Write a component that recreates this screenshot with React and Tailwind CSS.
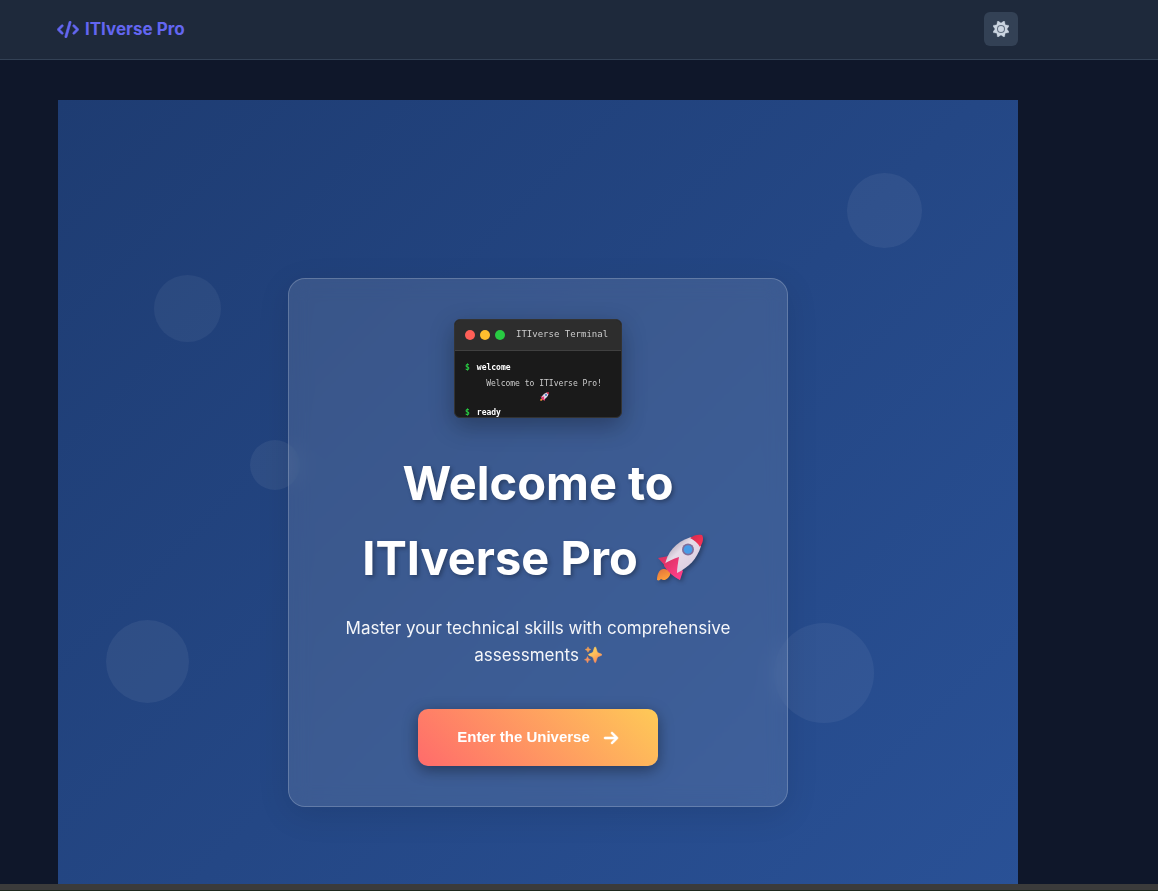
import React from "react";
import { FaCode, FaSun, FaArrowRight } from "react-icons/fa6";

function Rocket({ className, id }) {
  return (
    <svg viewBox="0 0 48 48" className={className} role="img" aria-label="rocket">
      <defs>
        <linearGradient id={id + "-body"} x1="0.2" y1="0.2" x2="0.75" y2="0.8">
          <stop offset="0" stopColor="#b9aebd" />
          <stop offset="0.35" stopColor="#e6dce8" />
          <stop offset="1" stopColor="#dccfe2" />
        </linearGradient>
        <linearGradient id={id + "-fin"} x1="0" y1="0" x2="0.7" y2="1">
          <stop offset="0" stopColor="#d8305e" />
          <stop offset="1" stopColor="#ff3f8a" />
        </linearGradient>
        <linearGradient id={id + "-nose"} x1="0" y1="0" x2="1" y2="1">
          <stop offset="0" stopColor="#d42a4c" />
          <stop offset="1" stopColor="#ff3558" />
        </linearGradient>
        <linearGradient id={id + "-fire"} x1="0" y1="0" x2="0.5" y2="1">
          <stop offset="0" stopColor="#e0703c" />
          <stop offset="1" stopColor="#ffa03a" />
        </linearGradient>
      </defs>
      <path d="M7 35C3 36 1 40 1 46c2 1 3 0 4-1 2 2 5 1 7-1 3-3 3-7 0-8-2-1-3-1-5-1z" fill={"url(#" + id + "-fire)"} />
      <path d="M2 24l11-2 14 15-3 9c-6-4-12-9-15-14-2-3-5-6-7-8z" fill={"url(#" + id + "-fin)"} />
      <path d="M9 31C11 19 19 8 35 3l10 9C41 25 33 33 21 39L9 31z" fill={"url(#" + id + "-body)"} />
      <path d="M8 30c4-3 9-5 15-7-1 6-2 11-2 16l3 7C18 43 12 38 8 32z" fill={"url(#" + id + "-fin)"} />
      <path d="M34 4c4-3 8-4 12-3 2 3 1 8-2 12-2-4-6-7-10-9z" fill={"url(#" + id + "-nose)"} />
      <circle cx="32" cy="15.500" r="6" fill="#806f9b" />
      <circle cx="32" cy="15.500" r="4.300" fill="#479ce8" />
    </svg>
  );
}

function Sparkles({ className }) {
  return (
    <svg viewBox="0 0 18 18" className={className} role="img" aria-label="sparkles">
      <defs>
        <linearGradient id="sparkle" x1="0" y1="0" x2="0.6" y2="1">
          <stop offset="0" stopColor="#ffda5c" />
          <stop offset="0.55" stopColor="#fdbc5a" />
          <stop offset="1" stopColor="#f9875a" />
        </linearGradient>
      </defs>
      <path d="M10.500 1.500c.4-.8 1-.8 1.300 0l1.300 4c.3.9.7 1.300 1.600 1.600l2.600 1c.8.300.8 1 0 1.300l-2.600 1c-.9.300-1.300.7-1.600 1.600l-1.300 4c-.3.8-.9.800-1.300 0l-1.300-4c-.3-.9-.7-1.300-1.600-1.600l-2.500-1c-.8-.3-.8-1 0-1.300l2.500-1c.9-.3 1.300-.7 1.600-1.600z" fill="url(#sparkle)" stroke="url(#sparkle)" strokeWidth="0.600" />
      <path d="M4 .8l.9 1.900 1.900.8-1.900.9L4 6.300l-.9-1.900-1.900-.9 1.900-.8z" fill="#f2a056" stroke="#f2a056" strokeWidth="0.500" />
      <path d="M3.500 10.500l1 2.300 2 .9-2 .9-1 2.400-1-2.400-2-.9 2-.9z" fill="#f5935f" stroke="#f5935f" strokeWidth="0.500" />
    </svg>
  );
}

function Terminal() {
  return (
    <div className="h-[99px] w-[168px] overflow-hidden rounded-md border border-[#333333] bg-[#1a1a1a] font-['DejaVu_Sans_Mono',monospace] shadow-[0_8px_25px_rgba(0,0,0,0.3)]">
      <div className="flex h-[31px] items-center gap-[11px] border-b border-[#404040] bg-[#2d2d2d] px-[10px]">
        <div className="flex gap-[5px]">
          <span className="size-[10px] rounded-full bg-[#ff5f57]" />
          <span className="size-[10px] rounded-full bg-[#ffbd2e]" />
          <span className="size-[10px] rounded-full bg-[#28ca42]" />
        </div>
        <span className="text-[9px] whitespace-nowrap text-[#cccccc]">ITIverse Terminal</span>
      </div>
      <div className="flex flex-col gap-[3px] px-[10px] pt-[10px] text-[8px] leading-[13px]">
        <p className="flex gap-[7px]">
          <span className="font-bold text-[#28ca42]">$</span>
          <span className="font-bold text-white">welcome</span>
        </p>
        <div className="flex flex-col items-center pl-[12px] text-[#cccccc]">
          <span className="whitespace-nowrap">Welcome to ITIverse Pro!</span>
          <span className="flex h-[13px] items-center">
            <Rocket id="small" className="size-[9px]" />
          </span>
        </div>
        <p className="flex gap-[7px]">
          <span className="font-bold text-[#28ca42]">$</span>
          <span className="font-bold text-white">ready</span>
        </p>
      </div>
    </div>
  );
}

export default function App() {
  return (
    <div className="flex h-screen flex-col overflow-hidden bg-[#0f172a] font-[Inter,sans-serif]">
      <header className="flex h-[60px] shrink-0 items-center justify-between border-b border-[#334155] bg-[#1e293b] pr-[140px] pl-[57px]">
        <a href="#home" className="flex items-center gap-[6px] text-[17px] font-bold text-[#6366f1]">
          <FaCode className="h-[17px] w-[22px] stroke-current stroke-[20px]" aria-hidden="true" />
          ITIverse Pro
        </a>
        <button type="button" aria-label="Toggle theme" className="mb-[2px] flex size-[34px] items-center justify-center rounded-md bg-[#334155] text-[#cbd5e1]">
          <FaSun className="size-4 stroke-current stroke-[10px]" aria-hidden="true" />
        </button>
      </header>

      <main className="min-h-0 flex-1 overflow-hidden pt-10 pr-[140px] pl-[58px]">
        <section className="relative flex min-h-[calc(100vh-6px)] items-center justify-center overflow-hidden bg-[linear-gradient(135deg,#1e3c72_0%,#2a5298_100%)]">
          <span className="absolute top-[73px] right-[10%] size-[75px] rounded-full bg-white/6" />
          <span className="absolute top-[175px] left-[10%] size-[67px] rounded-full bg-white/5" />
          <span className="absolute top-[340px] left-[20%] size-[50px] rounded-full bg-white/6" />
          <span className="absolute top-[520px] left-[5%] size-[83px] rounded-full bg-white/6" />
          <span className="absolute top-[523px] right-[15%] size-[100px] rounded-full bg-white/5" />

          <div className="relative flex w-full max-w-[500px] flex-col items-center rounded-[17px] border border-white/20 bg-white/11 p-10 text-center text-white shadow-[0_8px_32px_rgba(0,0,0,0.1)] backdrop-blur-[10px]">
            <Terminal />
            <h1 className="mt-[27px] text-[47px] leading-[75px] font-bold [text-shadow:2px_2px_4px_rgba(0,0,0,0.3)]">
              Welcome to
              <br />
              <span className="flex items-center justify-center gap-[18px] pr-[10px]">
                ITIverse Pro
                <Rocket id="large" className="size-12 drop-shadow-[2px_2px_2px_rgba(0,0,0,0.3)]" />
              </span>
            </h1>
            <p className="mt-5 text-[17px] leading-[27px] text-white/95">
              Master your technical skills with comprehensive assessments{" "}
              <Sparkles className="inline size-[18px] align-[-3px]" />
            </p>
            <button type="button" className="mt-10 flex h-[57px] w-[240px] items-center justify-center gap-[13px] rounded-[10px] bg-[linear-gradient(45deg,#ff6b6b,#feca57)] font-['Liberation_Sans',sans-serif] text-[15px] font-bold text-white shadow-[0_4px_15px_rgba(0,0,0,0.4)]">
              Enter the Universe
              <FaArrowRight className="size-4 stroke-current stroke-[20px]" aria-hidden="true" />
            </button>
          </div>
        </section>
      </main>
      <footer className="h-[7px] shrink-0 border-b border-[#1f2a1f] bg-[#3b3b3b]" />
    </div>
  );
}
